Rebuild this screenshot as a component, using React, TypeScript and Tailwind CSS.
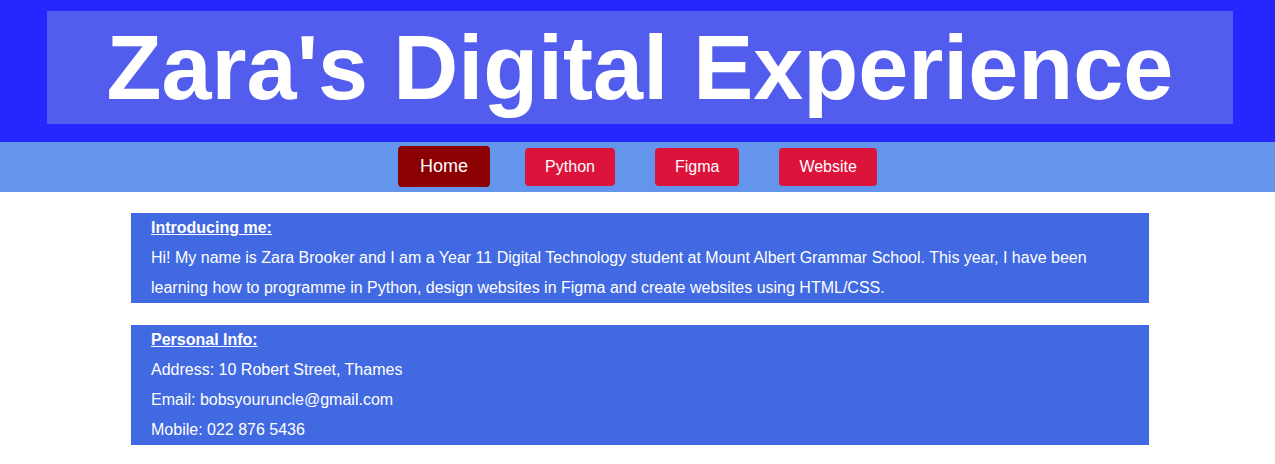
const navLinks = [
  { name: "Home", active: true },
  { name: "Python", active: false },
  { name: "Figma", active: false },
  { name: "Website", active: false },
];

export default function App() {
  return (
    <div className="min-h-[464px] bg-white font-['Liberation_Sans',Arial,sans-serif] text-white">
      {/* Header */}
      <header className="bg-[#2626ff] pt-[11px] pb-[18px]">
        <div className="ml-[47px] w-[1186px] h-[113px] bg-[#525ced] flex items-center justify-center">
          <h1 className="text-[90px] font-bold leading-[104px]">Zara's Digital Experience</h1>
        </div>
      </header>

      {/* Navigation */}
      <nav className="bg-[#6495ed] h-[50px] flex items-center justify-center">
        <div className="flex items-center gap-[40px]">
          {navLinks.map((link) =>
            link.active ? (
              <a
                key={link.name}
                href="#"
                className="bg-[#8b0000] h-[41px] px-[22px] rounded-[4px] flex items-center text-[18px] mr-[-5px] mb-[1px]"
              >
                {link.name}
              </a>
            ) : (
              <a
                key={link.name}
                href="#"
                className="bg-[#dc143c] h-[38px] px-[20px] rounded-[4px] flex items-center text-[16px]"
              >
                {link.name}
              </a>
            )
          )}
        </div>
      </nav>

      {/* Content */}
      <main className="pt-[21px] flex flex-col gap-[22px]">
        <section className="ml-[131px] w-[1018px] bg-[#4169e1] px-[20px] text-[16px] leading-[30px]">
          <h2 className="font-bold underline">Introducing me:</h2>
          <p>
            Hi! My name is Zara Brooker and I am a Year 11 Digital Technology student at Mount Albert Grammar School. This
            year, I have been learning how to programme in Python, design websites in Figma and create websites using
            HTML/CSS.
          </p>
        </section>
        <section className="ml-[131px] w-[1018px] bg-[#4169e1] px-[20px] text-[16px] leading-[30px]">
          <h2 className="font-bold underline">Personal Info:</h2>
          <p>Address: 10 Robert Street, Thames</p>
          <p>Email: bobsyouruncle@gmail.com</p>
          <p>Mobile: 022 876 5436</p>
        </section>
      </main>
    </div>
  );
}
